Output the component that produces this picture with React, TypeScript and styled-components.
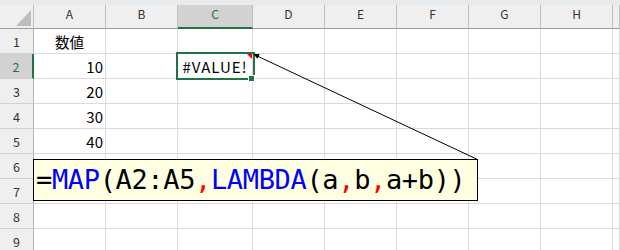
import React from 'react';
import styled, { createGlobalStyle } from 'styled-components';

const GREEN = '#217346';

const Global = createGlobalStyle`
  html, body { margin: 0; padding: 0; background: #fff; }
  body { width: 620px; height: 250px; overflow: hidden; }
`;

const Sheet = styled.div`
  position: relative;
  width: 620px;
  height: 250px;
  overflow: hidden;
  background: #fff;
  font-family: "Noto Sans CJK JP", "Noto Sans", sans-serif;
`;

const TopStrip = styled.div`
  height: 5px;
  background: #e8ebee;
`;

const Grid = styled.div`
  display: grid;
  grid-template-columns: 34px 72px 72px 75px repeat(5, 72px) 1fr;
  grid-template-rows: 24px repeat(9, 25px);
`;

const Corner = styled.div`
  box-sizing: border-box;
  background: #efefef;
  border-right: 1px solid #bfbfbf;
  border-bottom: 1px solid #9e9e9e;
  display: flex;
  align-items: flex-end;
  justify-content: flex-end;
  padding: 0 2px 2px 0;
  &::after {
    content: '';
    width: 0;
    height: 0;
    border-left: 15px solid transparent;
    border-bottom: 16px solid #bdbdbd;
  }
`;

const ColHeader = styled.div<{ $active?: boolean }>`
  box-sizing: border-box;
  background: ${p => (p.$active ? '#d2d2d2' : '#efefef')};
  border-right: 1px solid #bfbfbf;
  border-bottom: ${p => (p.$active ? `2px solid ${GREEN}` : '1px solid #9e9e9e')};
  display: flex;
  justify-content: center;
  align-items: flex-start;
  font-size: 12px;
  line-height: 17px;
  color: ${p => (p.$active ? GREEN : '#333')};
`;

const RowHeader = styled.div<{ $active?: boolean }>`
  box-sizing: border-box;
  background: ${p => (p.$active ? '#d2d2d2' : '#efefef')};
  border-right: ${p => (p.$active ? `2px solid ${GREEN}` : '1px solid #b4b4b4')};
  border-bottom: 1px solid #d0d0d0;
  display: flex;
  justify-content: center;
  align-items: center;
  font-size: 12.5px;
  color: ${p => (p.$active ? GREEN : '#333')};
`;

type Align = 'left' | 'center' | 'right';

const Cell = styled.div<{ $align?: Align }>`
  box-sizing: border-box;
  position: relative;
  border-right: 1px solid #dadada;
  border-bottom: 1px solid #dadada;
  display: flex;
  align-items: center;
  justify-content: ${p =>
    p.$align === 'right' ? 'flex-end' : p.$align === 'center' ? 'center' : 'flex-start'};
  padding: 0 2px;
  font-size: 15px;
  color: #000;
  white-space: nowrap;
`;

const Label = styled.span<{ $size?: number }>`
  font-size: ${p => p.$size ?? 15}px;
`;

const ErrorText = styled.span`
  letter-spacing: 1px;
  color: #000;
`;

const Selection = styled.div`
  position: absolute;
  left: -2px;
  top: -2px;
  right: -3px;
  bottom: -2px;
  border: 2px solid ${GREEN};
  pointer-events: none;
  z-index: 2;
`;

const FillHandle = styled.div`
  position: absolute;
  right: -2px;
  bottom: -4px;
  width: 5px;
  height: 5px;
  background: ${GREEN};
  border: 1px solid #fff;
`;

const NoteMark = styled.div`
  position: absolute;
  top: 0;
  right: 0;
  width: 0;
  height: 0;
  border-left: 5px solid transparent;
  border-top: 5px solid #ff0000;
`;

const CommentBox = styled.div`
  position: absolute;
  left: 33px;
  top: 159px;
  width: 445px;
  height: 42px;
  box-sizing: border-box;
  border: 1px solid #000;
  background: #ffffe1;
  padding-left: 2px;
  font-family: "DejaVu Sans Mono", "Liberation Mono", monospace;
  font-size: 27px;
  letter-spacing: -0.35px;
  line-height: 40px;
  white-space: nowrap;
  z-index: 3;
`;

const Tok = styled.span<{ $c: 'k' | 'f' | 's' }>`
  color: ${p => (p.$c === 'f' ? '#0000ff' : p.$c === 's' ? '#ff0000' : '#000')};
`;

const Leader = styled.svg`
  position: absolute;
  left: 0;
  top: 0;
  z-index: 4;
  pointer-events: none;
`;

const COLS = ['A', 'B', 'C', 'D', 'E', 'F', 'G', 'H', ''];

type CellData = { text: string; align: Align; size?: number; error?: boolean };

const DATA: Record<string, CellData> = {
  A1: { text: '数値', align: 'center', size: 14.5 },
  A2: { text: '10', align: 'right' },
  A3: { text: '20', align: 'right' },
  A4: { text: '30', align: 'right' },
  A5: { text: '40', align: 'right' },
  C2: { text: '#VALUE!', align: 'center', error: true },
};

const FORMULA: [string, 'k' | 'f' | 's'][] = [
  ['=', 'k'],
  ['MAP', 'f'],
  ['(A2:A5', 'k'],
  [',', 's'],
  ['LAMBDA', 'f'],
  ['(a', 'k'],
  [',', 's'],
  ['b', 'k'],
  [',', 's'],
  ['a+b))', 'k'],
];

export default function App() {
  const rows = [1, 2, 3, 4, 5, 6, 7, 8, 9];
  return (
    <>
      <Global />
      <Sheet>
        <TopStrip />
        <Grid>
          <Corner />
          {COLS.map((c, i) => (
            <ColHeader key={i} $active={c === 'C'}>
              {c}
            </ColHeader>
          ))}
          {rows.map(r => (
            <React.Fragment key={r}>
              <RowHeader $active={r === 2}>{r}</RowHeader>
              {COLS.map((c, i) => {
                const id = `${c}${r}`;
                const d = c ? DATA[id] : undefined;
                const selected = id === 'C2';
                return (
                  <Cell key={i} $align={d?.align}>
                    {d &&
                      (d.error ? (
                        <ErrorText>{d.text}</ErrorText>
                      ) : (
                        <Label $size={d.size}>{d.text}</Label>
                      ))}
                    {selected && (
                      <>
                        <NoteMark />
                        <Selection>
                          <FillHandle />
                        </Selection>
                      </>
                    )}
                  </Cell>
                );
              })}
            </React.Fragment>
          ))}
        </Grid>
        <CommentBox>
          {FORMULA.map(([t, c], i) => (
            <Tok key={i} $c={c}>
              {t}
            </Tok>
          ))}
        </CommentBox>
        <Leader width={620} height={250} viewBox="0 0 620 250">
          <line x1={258} y1={56.4} x2={477.5} y2={159.5} stroke="#000" strokeWidth={1} />
          <polygon points="253.5,54 259.6,53.9 257.4,58.7" fill="#000" />
        </Leader>
      </Sheet>
    </>
  );
}
